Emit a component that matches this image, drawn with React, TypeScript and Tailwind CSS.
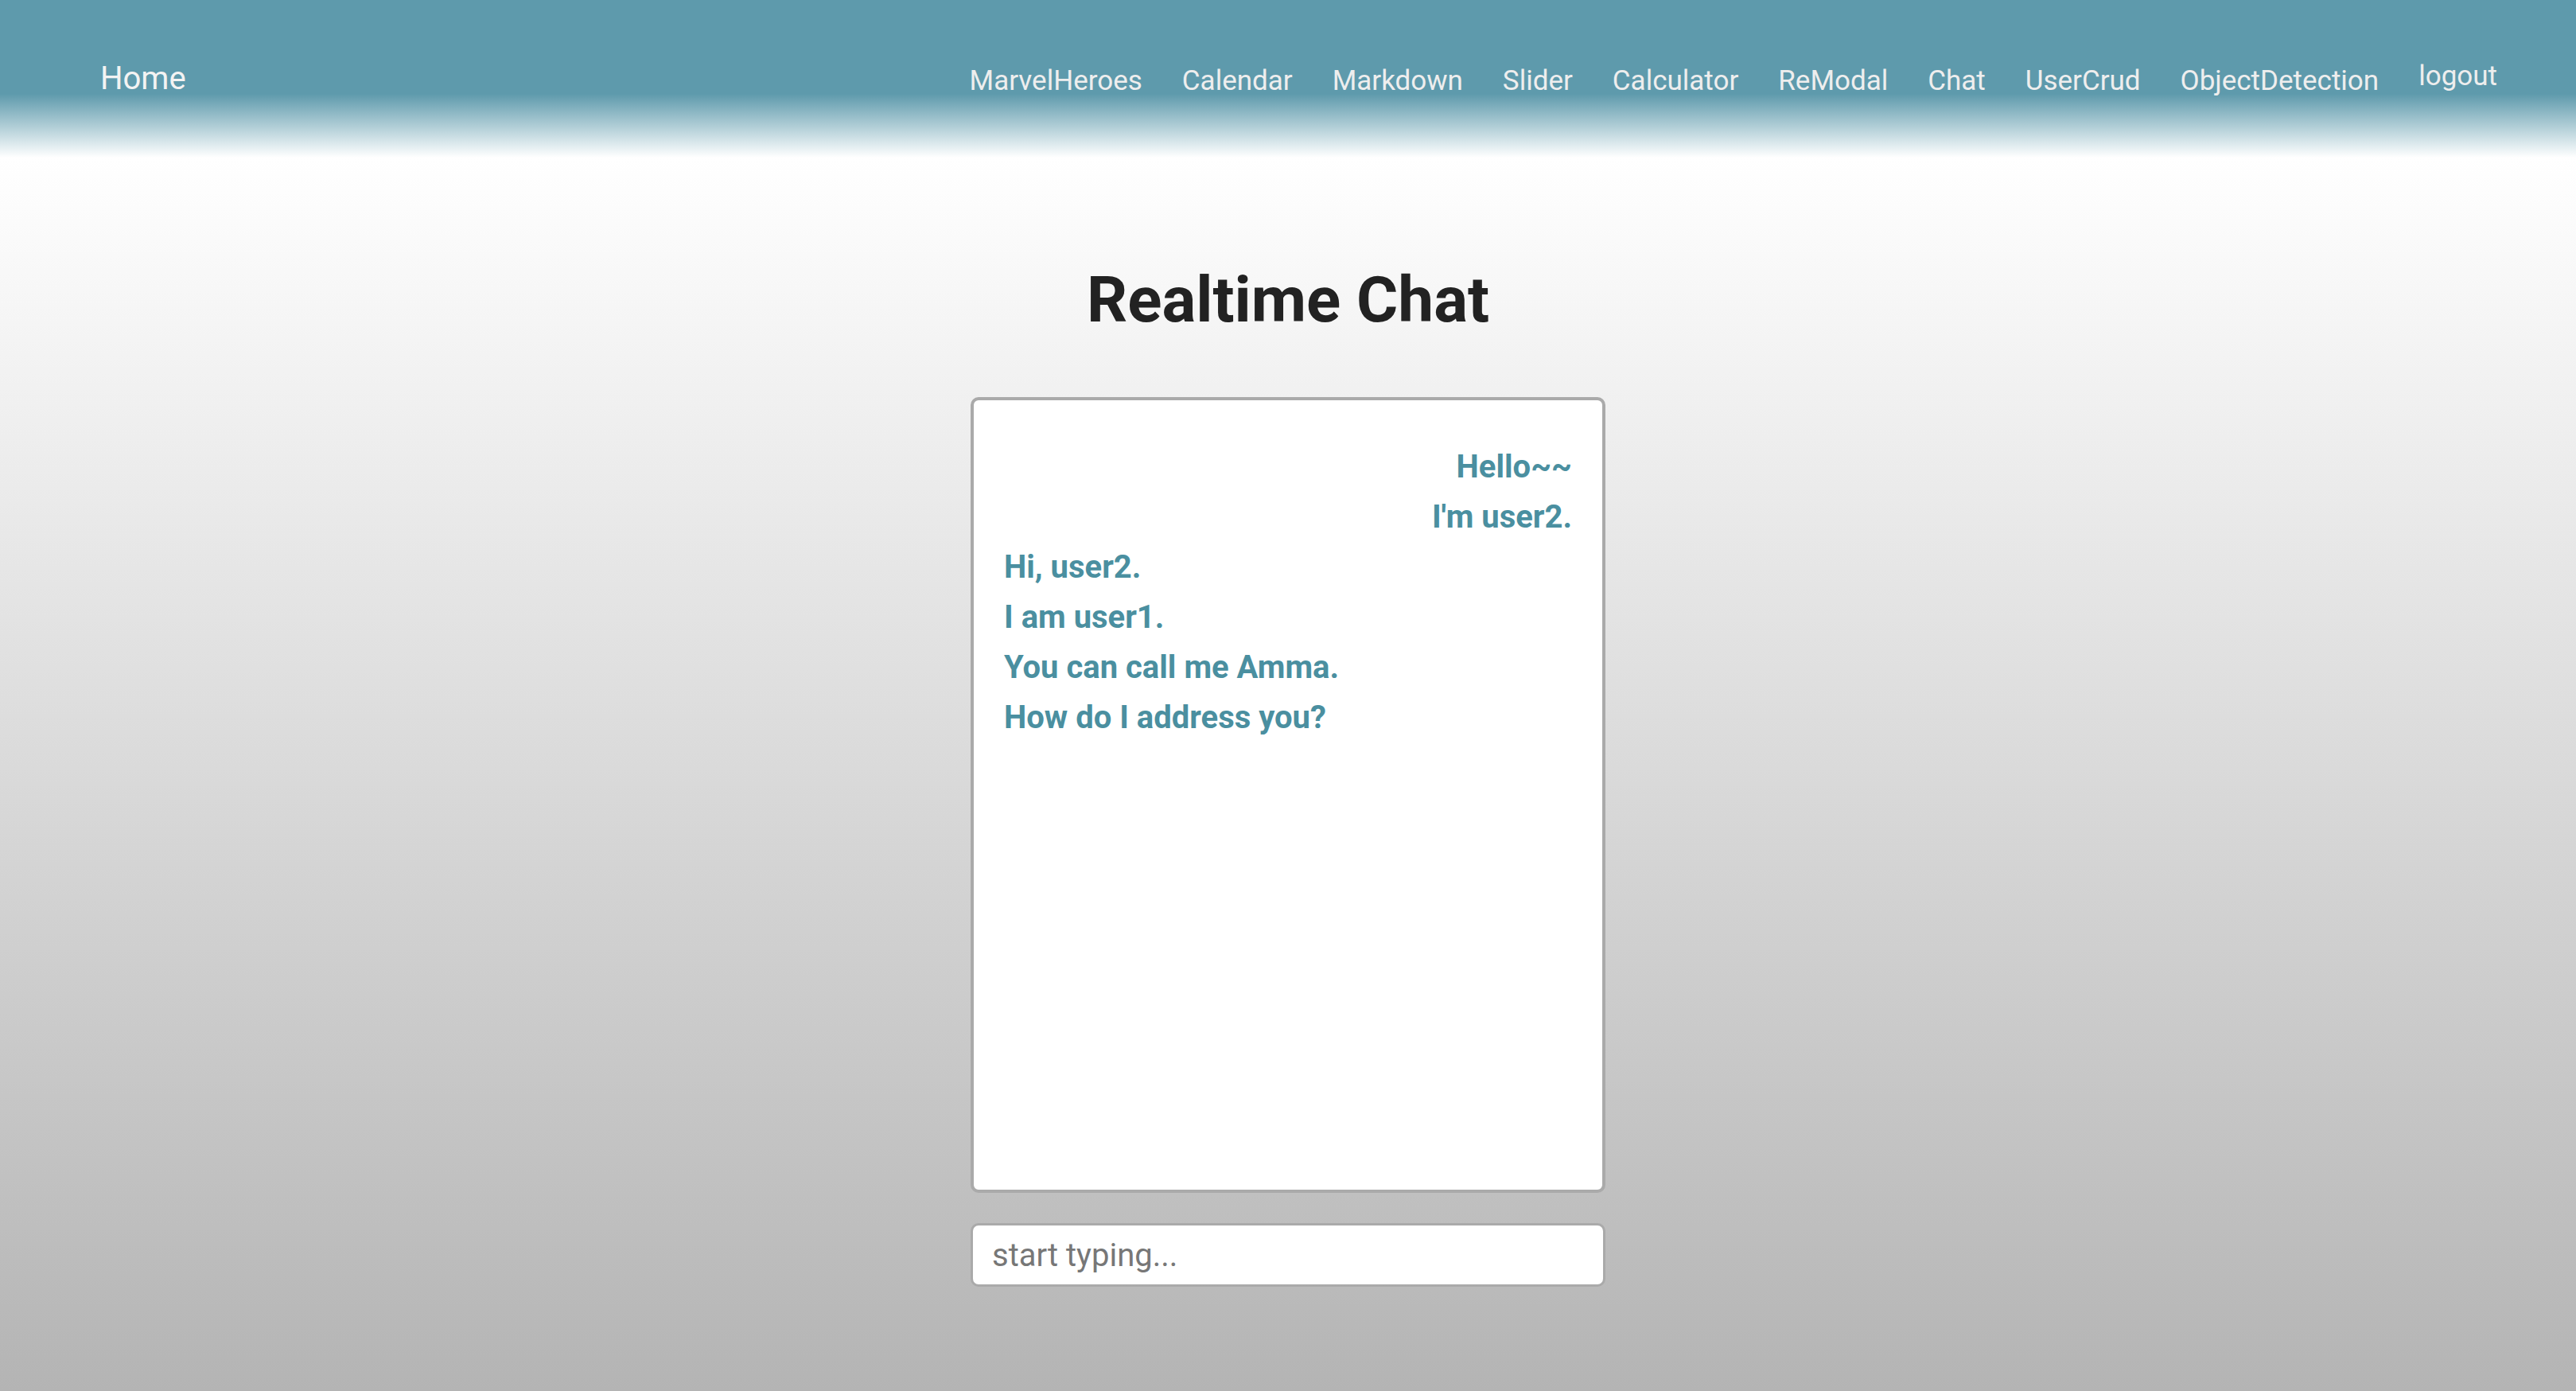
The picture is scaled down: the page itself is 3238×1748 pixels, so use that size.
import { useState } from "react";

const links = [
  "MarvelHeroes",
  "Calendar",
  "Markdown",
  "Slider",
  "Calculator",
  "ReModal",
  "Chat",
  "UserCrud",
  "ObjectDetection",
];

// 채팅 메시지
const messages = [
  { id: 1, text: "Hello~~", mine: false },
  { id: 2, text: "I'm user2.", mine: false },
  { id: 3, text: "Hi, user2.", mine: true },
  { id: 4, text: "I am user1.", mine: true },
  { id: 5, text: "You can call me Amma.", mine: true },
  { id: 6, text: "How do I address you?", mine: true },
];

export default function App() {
  const [text, setText] = useState("");

  return (
    <div
      className="min-h-screen bg-[linear-gradient(to_bottom,#5e9aac_0px,#5e9aac_118px,#ffffff_198px,#b4b4b4_100%)] text-[#222]"
      style={{ fontFamily: "Roboto, 'Liberation Sans', sans-serif" }}
    >
      {/* header */}
      <header className="flex h-[198px] items-start justify-between pl-[126px] pr-[99px]">
        <a className="pt-[79px] text-[40px] leading-none text-[#f3f3f3]">Home</a>
        <nav className="flex items-start gap-[50px] pt-[84px]">
          {links.map((l) => (
            <a key={l} className="text-[35px] leading-none text-[#eeeeee]">
              {l}
            </a>
          ))}
          <button className="-mt-[6px] text-[35px] leading-none text-[#eeeeee]">logout</button>
        </nav>
      </header>

      <main className="flex flex-col items-center pb-[40px]">
        <h1 className="mt-[139px] text-[80px] font-bold leading-none text-[#222]">Realtime Chat</h1>

        <div className="mt-[82px] h-[1000px] w-[798px] rounded-[10px] border-4 border-[#aaaaaa] bg-white px-[38px] pt-[52px]">
          {messages.map((m) => (
            <div
              key={m.id}
              className={`text-[40px] font-bold leading-[63px] text-[#4a8fa0] ${m.mine ? "text-left" : "text-right"}`}
            >
              {m.text}
            </div>
          ))}
        </div>

        <input
          value={text}
          onChange={(e) => setText(e.target.value)}
          placeholder="start typing..."
          className="mt-[38px] h-[80px] w-[798px] rounded-[10px] border-[3px] border-[#aaaaaa] bg-white px-[24px] text-[40px] text-[#333] outline-none placeholder:text-[#777]"
        />
      </main>
    </div>
  );
}
